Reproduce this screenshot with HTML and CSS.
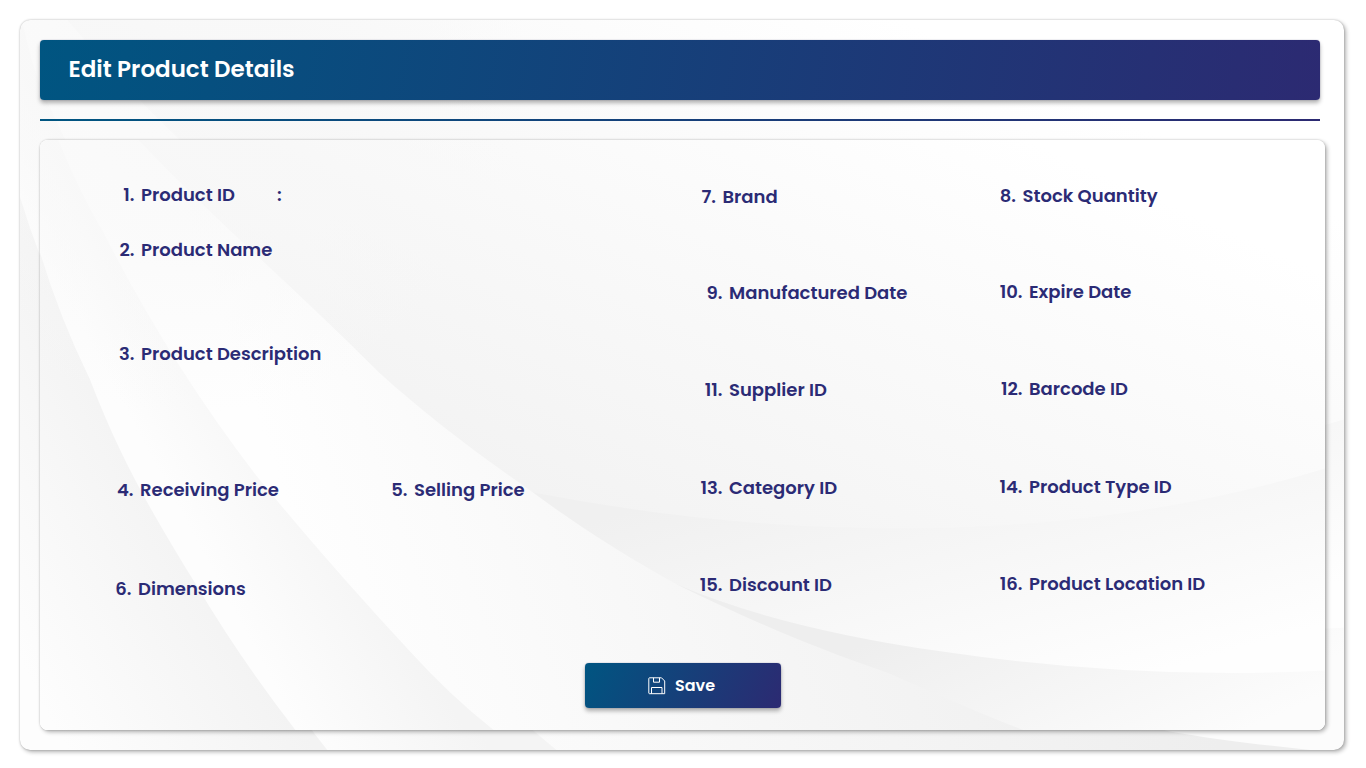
FILE: index.html
```html
<!DOCTYPE html>
<html lang="en">
<head>
<meta charset="utf-8">
<title>Edit Product Details</title>
<link rel="stylesheet" href="styles.css">
</head>
<body>
<svg class="defs" width="0" height="0" aria-hidden="true">
  <defs>
    <linearGradient id="g-sky" gradientUnits="userSpaceOnUse" x1="460" y1="406" x2="676" y2="-74"><stop offset="0" stop-color="#f3f3f3"/><stop offset="1" stop-color="#fff"/></linearGradient>
    <linearGradient id="g-sheet" gradientUnits="userSpaceOnUse" x1="270" y1="496" x2="1000" y2="240"><stop offset="0" stop-color="#fefefe"/><stop offset=".55" stop-color="#f5f5f5"/><stop offset="1" stop-color="#eee"/></linearGradient>
    <linearGradient id="g-band" gradientUnits="userSpaceOnUse" x1="128" y1="416" x2="258" y2="346"><stop offset="0" stop-color="#fdfdfd"/><stop offset="1" stop-color="#f4f4f4"/></linearGradient>
    <linearGradient id="g-left" gradientUnits="userSpaceOnUse" x1="128" y1="416" x2="-60" y2="516"><stop offset="0" stop-color="#f3f3f3"/><stop offset="1" stop-color="#fdfdfd"/></linearGradient>
    <linearGradient id="g-wave" gradientUnits="userSpaceOnUse" x1="580" y1="440" x2="660" y2="726"><stop offset="0" stop-color="#f0f0f0"/><stop offset="1" stop-color="#fefefe"/></linearGradient>
    <linearGradient id="g-low" gradientUnits="userSpaceOnUse" x1="810" y1="576" x2="905" y2="790"><stop offset="0" stop-color="#eee"/><stop offset="1" stop-color="#fcfcfc"/></linearGradient>
    <radialGradient id="g-haze" gradientUnits="userSpaceOnUse" cx="150" cy="0" r="340"><stop offset="0" stop-color="#f8f8f8" stop-opacity=".85"/><stop offset=".5" stop-color="#f8f8f8" stop-opacity=".6"/><stop offset="1" stop-color="#f8f8f8" stop-opacity="0"/></radialGradient>
    <symbol id="backdrop" viewBox="0 0 1285 723" preserveAspectRatio="xMidYMid slice">
      <rect width="1285" height="723" fill="url(#g-sky)"/>
      <path d="M493 419Q680 455 858 455Q1090 455 1285 395V723H493z" fill="url(#g-wave)"/>
      <path d="M637 511Q740 555 902 578Q1100 607 1285 597V723H637z" fill="url(#g-low)"/>
      <path d="M40 0C130 110 220 180 339 299C390 345 440 382 493 419C540 454 590 485 637 511C700 542 770 573 847 599C900 622 940 640 982 656C1040 678 1080 689 1117 698Q1180 709 1285 719V723H0V0z" fill="url(#g-sheet)"/>
      <path d="M0 0Q10 45 18 66Q40 120 64 160Q130 290 217 403Q290 492 371 579Q410 622 453 656Q500 700 530 723H0z" fill="url(#g-band)"/>
      <path d="M0 179Q20 245 50 306C80 385 115 445 156 511Q200 585 255 656Q275 687 304 723H0z" fill="url(#g-left)"/>
      <circle cx="150" cy="0" r="340" fill="url(#g-haze)"/>
    </symbol>
  </defs>
</svg>
<main class="shell">
  <svg class="bg"><use href="#backdrop"/></svg>
  <header class="title-bar"><h1>Edit Product Details</h1></header>
  <div class="rule"></div>
  <section class="card">
    <svg class="bg"><use href="#backdrop"/></svg>
    <div class="fields">
      <div class="left">
        <div class="row r1"><span class="num">1.</span><span class="label l-id">Product ID</span><span class="colon">:</span></div>
        <div class="row r2"><span class="num">2.</span><span class="label">Product Name</span></div>
        <div class="row r3"><span class="num">3.</span><span class="label">Product Description</span></div>
        <div class="row r4"><span class="num">4.</span><span class="label">Receiving Price</span><span class="num">5.</span><span class="label">Selling Price</span></div>
        <div class="row r5"><span class="num">6.</span><span class="label">Dimensions</span></div>
      </div>
      <div class="column mid">
        <div class="row outdent"><span class="num">7.</span><span class="label">Brand</span></div>
        <div class="row"><span class="num">9.</span><span class="label">Manufactured Date</span></div>
        <div class="row"><span class="num">11.</span><span class="label">Supplier ID</span></div>
        <div class="row"><span class="num">13.</span><span class="label">Category ID</span></div>
        <div class="row"><span class="num">15.</span><span class="label">Discount ID</span></div>
      </div>
      <div class="column end">
        <div class="row outdent"><span class="num">8.</span><span class="label">Stock Quantity</span></div>
        <div class="row"><span class="num">10.</span><span class="label">Expire Date</span></div>
        <div class="row"><span class="num">12.</span><span class="label">Barcode ID</span></div>
        <div class="row"><span class="num">14.</span><span class="label">Product Type ID</span></div>
        <div class="row"><span class="num">16.</span><span class="label">Product Location ID</span></div>
      </div>
    </div>
    <button class="save" type="button">
      <svg class="disk" width="18" height="18" viewBox="0 0 18 18" fill="none" stroke="#fff"><path d="M1.5.8H13.5L16.7 4V16.7H1.5Q.8 16.7.8 16V1.5Q.8.8 1.5.8z"/><path d="M5.5.8V5.2H11.5V.8M3.5 16.7V10.5H14V16.7"/></svg>
      <span>Save</span>
    </button>
  </section>
</main>
</body>
</html>
```
FILE: styles.css
```css
* { box-sizing: border-box; }
body {
  margin: 0;
  padding: 20px;
  height: 768px;
  overflow: hidden;
  background: #fff;
  font-family: Poppins, Inter, sans-serif;
}
.defs { position: absolute; }
.shell {
  position: relative;
  width: 1324px;
  height: 730px;
  padding: 20px 19px 20px 20px;
  border-radius: 10px;
  box-shadow: 2px 2px 4px rgba(0, 0, 0, .3), 0 0 2px rgba(0, 0, 0, .25);
}
.bg {
  position: absolute;
  inset: 0;
  z-index: -1;
  width: 100%;
  height: 100%;
  border-radius: inherit;
}
.title-bar {
  display: flex;
  align-items: center;
  width: 1280px;
  height: 60px;
  padding: 0 0 2px 28.5px;
  border-radius: 4px;
  background: linear-gradient(100deg, #005581, #2c2a72);
  box-shadow: 0 3px 4px rgba(0, 0, 0, .3), 0 0 1px rgba(44, 42, 114, .6);
}
.title-bar h1 {
  margin: 0;
  color: #fff;
  font-size: 23px;
  font-weight: 600;
  line-height: 30px;
}
.rule {
  width: 1280px;
  height: 2px;
  margin: 19px 0;
  background: linear-gradient(90deg, #005581, #2c2a72);
}
.card {
  position: relative;
  z-index: 0;
  width: 1285px;
  height: 590px;
  padding-top: 36px;
  border-radius: 8px;
  box-shadow: 2px 2px 4px rgba(0, 0, 0, .3), 0 0 2px rgba(0, 0, 0, .25);
}
.fields { display: flex; height: 487px; }
.left { width: 637px; margin-top: -1px; padding-left: 58px; }
.column { width: 300px; }
.row {
  display: flex;
  align-items: flex-start;
  height: 97.3px;
  color: #2b2b75;
  font-size: 18px;
  font-weight: 600;
  line-height: 40px;
  white-space: nowrap;
}
.num { width: 36.5px; text-align: right; }
.label { margin-left: 6.5px; }
.r1 { height: 55px; }
.r2 { height: 104px; }
.r3 { height: 136px; }
.r4 { height: 99px; margin-left: -1px; }
.r4 .label { width: 231px; }
.r5 { margin-left: -3px; }
.l-id { width: 136px; }
.mid { padding: 1px 0 0 9px; }
.end { padding-left: 9px; }
.outdent { height: 96px; margin-left: -6.5px; }
.save {
  display: flex;
  align-items: center;
  justify-content: center;
  gap: 9px;
  width: 196px;
  height: 45px;
  margin-left: 545px;
  padding: 0 3px 0 0;
  border: 0;
  border-radius: 4px;
  background: linear-gradient(115deg, #005581, #2c2a72);
  box-shadow: 0 3px 4px rgba(0, 0, 0, .3), 0 0 1px rgba(44, 42, 114, .6);
  color: #fff;
  font: 600 16px/24px Poppins, Inter, sans-serif;
}
```
